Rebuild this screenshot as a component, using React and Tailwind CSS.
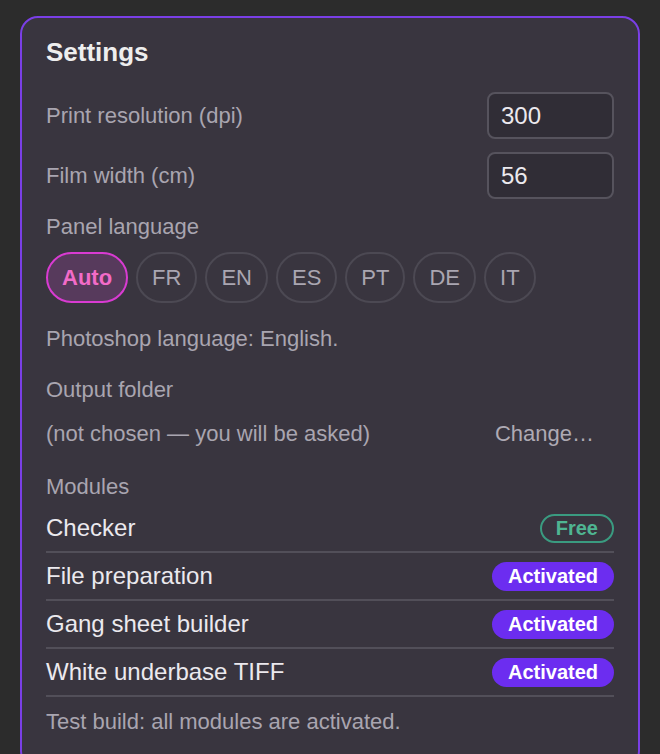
const langs = ['Auto', 'FR', 'EN', 'ES', 'PT', 'DE', 'IT'];

const modules = [
  { name: 'Checker', free: true },
  { name: 'File preparation' },
  { name: 'Gang sheet builder' },
  { name: 'White underbase TIFF' },
];

function Field({ label, value, className = '' }) {
  return (
    <div className={`flex items-center justify-between ${className}`}>
      <span className="text-[22px] leading-[26px] text-[#a9a5b0]">{label}</span>
      <div className="flex h-[47px] w-[127px] items-center rounded-lg border-2 border-[#56535d] bg-[#302d36] px-3 text-[24px] text-[#ebe9ee]">
        {value}
      </div>
    </div>
  );
}

export default function App() {
  return (
    <div className="min-h-[754px] overflow-hidden bg-[#2c2c2c] px-5 pt-4 font-['Liberation_Sans',Arial,sans-serif]">
      <div className="rounded-[18px] border-2 border-[#7a3fe6] bg-[#39353f] px-6 pb-8 pt-[19px]">
        <h1 className="text-[26px] font-bold leading-[30px] text-[#eeeeee]">Settings</h1>

        <Field label="Print resolution (dpi)" value="300" className="mt-[25px]" />
        <Field label="Film width (cm)" value="56" className="mt-[13px]" />

        <div className="mt-[15px] text-[22px] leading-[26px] text-[#a9a5b0]">Panel language</div>
        <div className="mt-3 flex gap-2">
          {langs.map((l) =>
            l === 'Auto' ? (
              <button
                key={l}
                className="flex h-[51px] items-center rounded-full border-2 border-[#d93bd2] bg-[#573a5c] px-[14px] text-[22px] font-bold text-[#f26bc8]"
              >
                {l}
              </button>
            ) : (
              <button
                key={l}
                className="flex h-[51px] items-center rounded-full border-2 border-[#4c4953] px-[14px] text-[22px] text-[#aaa6b1]"
              >
                {l}
              </button>
            )
          )}
        </div>

        <p className="mt-[23px] text-[22px] leading-[26px] text-[#a9a5b0]">Photoshop language: English.</p>

        <div className="mt-[25px] text-[22px] leading-[26px] text-[#a9a5b0]">Output folder</div>
        <div className="mt-[10px] flex h-[40px] items-center justify-between">
          <span className="text-[22px] text-[#a9a5b0]">(not chosen — you will be asked)</span>
          <button className="px-5 text-[22px] text-[#aeaab4]">Change…</button>
        </div>

        <div className="mt-[21px] text-[22px] leading-[26px] text-[#a9a5b0]">Modules</div>
        <div className="mt-[5px]">
          {modules.map((m) => (
            <div key={m.name} className="flex h-[48px] items-center justify-between border-b-2 border-[#524f59]">
              <span className="text-[24px] text-[#ebe9ee]">{m.name}</span>
              {m.free ? (
                <span className="flex h-[29px] items-center rounded-full border-2 border-[#3a9b80] px-[14px] text-[20px] font-bold text-[#4fb592]">
                  Free
                </span>
              ) : (
                <span className="flex h-[29px] items-center rounded-full bg-[#6c2df0] px-4 text-[20px] font-bold text-white">
                  Activated
                </span>
              )}
            </div>
          ))}
        </div>

        <p className="mt-3 text-[22px] leading-[26px] text-[#a9a5b0]">Test build: all modules are activated.</p>
      </div>
    </div>
  );
}
